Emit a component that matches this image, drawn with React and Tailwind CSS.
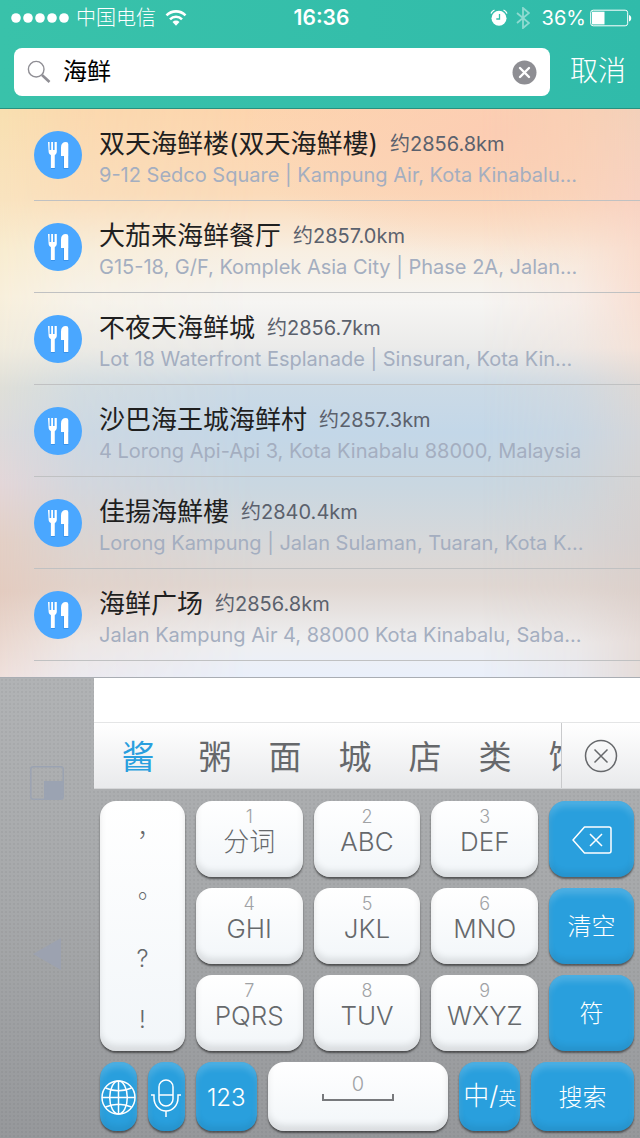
import { useState } from 'react';
import { clsx } from 'clsx';

const places = [
  { name: '双天海鲜楼(双天海鮮樓)', distance: '约2856.8km', address: '9-12 Sedco Square | Kampung Air, Kota Kinabalu...' },
  { name: '大茄来海鲜餐厅', distance: '约2857.0km', address: 'G15-18, G/F, Komplek Asia City | Phase 2A, Jalan...' },
  { name: '不夜天海鲜城', distance: '约2856.7km', address: 'Lot 18 Waterfront Esplanade | Sinsuran, Kota Kin...' },
  { name: '沙巴海王城海鲜村', distance: '约2857.3km', address: '4 Lorong Api-Api 3, Kota Kinabalu 88000, Malaysia' },
  { name: '佳揚海鮮樓', distance: '约2840.4km', address: 'Lorong Kampung | Jalan Sulaman, Tuaran, Kota K...' },
  { name: '海鲜广场', distance: '约2856.8km', address: 'Jalan Kampung Air 4, 88000 Kota Kinabalu, Saba...' },
];

const candidates = ['酱', '粥', '面', '城', '店', '类', '馆'];
const punctuation = ['，', '。', '?', '!'];

const keyRows = [
  [['1', '分词'], ['2', 'ABC'], ['3', 'DEF']],
  [['4', 'GHI'], ['5', 'JKL'], ['6', 'MNO']],
  [['7', 'PQRS'], ['8', 'TUV'], ['9', 'WXYZ']],
];

export default function App() {
  return (
    <div className="flex min-h-screen flex-col bg-[#9b9da0] font-[Inter,'Noto_Sans_CJK_SC',sans-serif]">
      <header className="border-b border-[#26917f] bg-linear-to-r from-[#39c2aa] to-[#30bbaa] text-white">
        <StatusBar />
        <SearchBar />
      </header>
      <Results />
      <Keyboard />
    </div>
  );
}

function StatusBar() {
  return (
    <div className="grid h-9 grid-cols-[1fr_auto_1fr] items-center pr-2 pl-[11px] text-xl">
      <div className="flex items-center gap-[7px]">
        <svg className="h-3 w-[58px]" viewBox="0 0 58 12" fill="currentColor">
          {[5, 17, 29, 41, 53].map((x) => (
            <circle key={x} cx={x} cy="6" r="4.8" />
          ))}
        </svg>
        <span className="font-light">中国电信</span>
        <WifiIcon />
      </div>
      <span className="text-[21px] font-semibold">16:36</span>
      <div className="flex items-center justify-end">
        <AlarmIcon />
        <BluetoothIcon />
        <span className="mr-1">36%</span>
        <svg className="h-[18px] w-[42px]" viewBox="0 0 42 18">
          <rect x="0.7" y="1.2" width="37" height="15.6" rx="2.5" fill="none" stroke="currentColor" strokeWidth="1" />
          <rect x="2" y="2.700" width="12.5" height="12.7" fill="currentColor" />
          <path d="M39 6c3 .5 3 6 0 6.500z" fill="currentColor" />
        </svg>
      </div>
    </div>
  );
}

function SearchBar() {
  const [query, setQuery] = useState('海鲜');

  return (
    <form className="flex items-center gap-5 px-[14px] py-3" onSubmit={(e) => e.preventDefault()}>
      <div className="flex h-12 min-w-0 flex-1 items-center rounded-lg bg-white px-[13px]">
        <svg className="mr-3 size-6 shrink-0" viewBox="0 0 24 24" fill="none" stroke="#8f8e94">
          <circle cx="9.200" cy="9.200" r="7.800" strokeWidth="1.400" />
          <path d="m15 15 7.500 7" strokeWidth="2.600" />
        </svg>
        <input
          type="text"
          aria-label="搜索"
          value={query}
          onChange={(e) => setQuery(e.target.value)}
          className="min-w-0 flex-1 bg-transparent text-2xl text-black outline-none"
        />
        <button type="button" aria-label="清空" onClick={() => setQuery('')}>
          <svg className="size-[25px]" viewBox="0 0 25 25">
            <circle cx="12.500" cy="12.500" r="12" fill="#8e8e93" />
            <path d="m8 8 9 9m0-9-9 9" stroke="#fff" strokeWidth="2.400" strokeLinecap="round" />
          </svg>
        </button>
      </div>
      <button type="button" className="pb-0.5 text-[28px] leading-9 font-light">取消</button>
    </form>
  );
}

function Results() {
  return (
    <main className="grid">
      {/* soft wallpaper: a middle tone with warmer left and right edges */}
      <div className="[grid-area:1/1] bg-[radial-gradient(ellipse_40%_25%_at_78%_4%,#fccdb3,transparent),linear-gradient(to_bottom,#fdd5ae_0%,#fbdbba_15%,#f8efe2_25%,#f6f5f3_34%,#ebebea_42%,#cbdae6_49%,#c3d7e8_57%,#c9d7e1_66%,#d6d8da_76%,#e0d7d2_84%,#eff0f2_94%,#eaf0fb_100%)]" />
      <div className="[grid-area:1/1] mask-[linear-gradient(to_right,black,#00000066_12%,transparent_40%)] bg-[linear-gradient(to_bottom,#f8dfb0_0%,#f9e3bf_16%,#f8ecd0_25%,#f8efdb_33%,#f0ebdd_42%,#dfdfd8_49%,#dcdadb_57%,#e3d6d8_66%,#e3cfc5_76%,#e3cbbf_85%,#ead8d0_94%,#efe0dc_100%)]" />
      <div className="[grid-area:1/1] mask-[linear-gradient(to_left,black,#00000059_10%,transparent_25%)] bg-[linear-gradient(to_bottom,#f3d0ba_0%,#f8d2c2_16%,#f9dccd_25%,#f8dfd3_33%,#f4e2d8_42%,#dcd8d6_49%,#d5d6d9_57%,#d5d3d3_66%,#d6d0cf_76%,#dcd0cb_85%,#e6dcd9_94%,#e5dcd9_100%)]" />
      <ul className="z-10 [grid-area:1/1] pb-4 pl-[34px]">
        {places.map((place) => (
          <PlaceRow key={place.name} {...place} />
        ))}
      </ul>
    </main>
  );
}

function PlaceRow({ name, distance, address }) {
  return (
    <li className="flex h-[92px] items-center gap-[17px] border-b border-[#c0c1c2] pr-6">
      <ForkKnifeIcon />
      <div className="min-w-0 flex-1 pt-2">
        <div className="flex items-center gap-3">
          <h2 className="text-[26px] leading-8 whitespace-nowrap text-[#1f1f1f]">{name}</h2>
          <span className="text-xl leading-8 whitespace-nowrap text-[#5b616d]">{distance}</span>
        </div>
        <p className="truncate text-xl leading-[30px] text-[#a4aec0]">{address}</p>
      </div>
    </li>
  );
}

function Keyboard() {
  return (
    <section className="flex flex-1 border-t border-[#a9adb3] bg-[radial-gradient(#0000000a_1px,transparent_1px),linear-gradient(to_bottom,#b1b3b5,#a6a8aa_50%,#96989b)] bg-size-[4px_4px,100%_100%]">
      <aside className="flex w-[94px] shrink-0 flex-col items-center pt-[88px]">
        <button type="button" aria-label="缩小键盘">
          <svg className="size-[34px]" viewBox="0 0 34 34">
            <rect x="0.800" y="0.800" width="32.400" height="32.400" rx="2.500" fill="none" stroke="#9ba3b2" strokeWidth="1.500" />
            <path d="M14 15h19v15.500q0 2.500-2.500 2.500H14z" fill="#9ba3b2" />
          </svg>
        </button>
        <button type="button" aria-label="靠左" className="mt-[138px]">
          <svg className="h-8 w-7" viewBox="0 0 28 32" fill="#9ca2b0">
            <path d="M0 16 28 0v32z" />
          </svg>
        </button>
      </aside>

      <div className="flex min-w-0 flex-1 flex-col">
        <div className="h-11 bg-white" />
        <CandidateBar />
        <div className="flex flex-col gap-[11px] px-[6px] pt-3 pb-[7px]">
          <div className="grid grid-cols-[85fr_107fr_107fr_107fr_85fr] gap-[11px]">
            <div className="row-span-3 flex flex-col rounded-2xl bg-linear-to-b from-white to-[#f2f6f9] pt-1 font-[Inter,'Noto_Sans_CJK_TC',sans-serif] text-2xl font-light text-[#66696c] shadow-[0_2px_2px_#00000080,inset_0_-6px_6px_#0000001a]">
              {punctuation.map((mark) => (
                <button key={mark} type="button" lang="zh-TW" className="flex-1">
                  {mark}
                </button>
              ))}
            </div>
            {keyRows.map((row, i) => (
              <KeyRow key={i} row={row} action={i} />
            ))}
          </div>
          <div className="grid grid-cols-[37fr_37fr_61fr_181fr_61fr_103fr] gap-[11px]">
            <BlueKey label="切换输入法" className="h-[69px]"><GlobeIcon /></BlueKey>
            <BlueKey label="语音" className="h-[69px]"><MicIcon /></BlueKey>
            <BlueKey className="h-[69px]">123</BlueKey>
            <button type="button" aria-label="空格" className="flex h-[69px] flex-col items-center rounded-2xl bg-linear-to-b from-white to-[#f2f6f9] pt-3 shadow-[0_2px_2px_#00000080,inset_0_-6px_6px_#0000001a]">
              <span className="text-xl leading-5 font-light text-[#a0a2a5]">0</span>
              <svg className="h-2 w-[72px]" viewBox="0 0 72 8" fill="none" stroke="#77797c" strokeWidth="2">
                <path d="M1 0v6h70V0" />
              </svg>
            </button>
            <BlueKey className="h-[69px]">
              <span className="text-[26px] leading-8 whitespace-nowrap">
                中/<span className="text-lg leading-8">英</span>
              </span>
            </BlueKey>
            <BlueKey className="h-[69px]">搜索</BlueKey>
          </div>
        </div>
      </div>
    </section>
  );
}

function CandidateBar() {
  return (
    <div className="flex h-[67px] border-t border-b border-t-[#e4e5e6] border-b-[#d5d6d8] bg-linear-to-b from-white to-[#e9eaec]">
      <div className="flex min-w-0 flex-1 gap-[10px] overflow-hidden pt-1 pl-[7px]">
        {candidates.map((word, i) => (
          <button
            key={word}
            type="button"
            className={clsx('shrink-0 text-[33px]', i === 0 ? 'w-[74px] text-[#2a9fde]' : 'w-[60px] text-[#66686b]')}
          >
            {word}
          </button>
        ))}
      </div>
      <button type="button" aria-label="关闭" className="flex w-[79px] shrink-0 items-center justify-center border-l border-[#c9cacc]">
        <svg className="size-[34px]" viewBox="0 0 34 34" fill="none" stroke="#66686b" strokeWidth="1.500">
          <circle cx="17" cy="17" r="15.500" />
          <path d="m10.500 10.500 13 13m0-13-13 13" />
        </svg>
      </button>
    </div>
  );
}

function KeyRow({ row, action }) {
  return (
    <>
      {row.map(([digit, letters]) => (
        <button
          key={digit}
          type="button"
          className="flex h-[76px] flex-col items-center rounded-2xl bg-linear-to-b from-white to-[#f2f6f9] pt-[7px] text-[#66696c] shadow-[0_2px_2px_#00000080,inset_0_-6px_6px_#0000001a]"
        >
          <span className="text-lg leading-[18px] font-light text-[#a0a2a5]">{digit}</span>
          <span className="text-[26px] leading-8 font-light">{letters}</span>
        </button>
      ))}
      {action === 0 && <BlueKey label="删除" className="h-[76px]"><BackspaceIcon /></BlueKey>}
      {action === 1 && <BlueKey className="h-[76px]">清空</BlueKey>}
      {action === 2 && <BlueKey className="h-[76px]">符</BlueKey>}
    </>
  );
}

function BlueKey({ label, className, children }) {
  return (
    <button
      type="button"
      aria-label={label}
      className={clsx(
        'flex items-center justify-center rounded-2xl bg-[#299fdd] pt-0.5 text-2xl font-light text-white shadow-[0_2px_2px_#00000073,inset_0_6px_6px_#ffffff2b,inset_0_-5px_6px_#00000014]',
        className
      )}
    >
      {children}
    </button>
  );
}

function ForkKnifeIcon() {
  return (
    <svg className="size-12 shrink-0" viewBox="0 0 48 48">
      <circle cx="24" cy="24" r="24" fill="#4aa7ff" />
      <path d="M17 25h4v13h-4zM29.500 25h5v13h-5z" fill="#2b83dc" opacity=".6" />
      <g fill="#fff">
        <path d="M14 11h1.600v8h1.600v-8h1.800v8h1.600v-8h2.200v9.500c0 1.900-.9 3-2 3.600V37h-3.900V24.100c-1.300-.6-2.300-1.700-2.300-3.600z" />
        <path d="M32 11q2.300 0 2.300 2.300V37h-4.300V25h-3v-8.500q0-5.500 5-5.500z" />
      </g>
    </svg>
  );
}

function WifiIcon() {
  return (
    <svg className="ml-0.5 h-[18px] w-[22px]" viewBox="0 0 22 18" fill="none" stroke="currentColor" strokeWidth="2.600">
      <path d="M1.500 6.300a13.500 13.500 0 0 1 19 0M5 10.300a8.500 8.500 0 0 1 12 0" />
      <path d="M7.500 13a5 5 0 0 1 7 0L11 16.800z" fill="currentColor" stroke="none" />
    </svg>
  );
}

function AlarmIcon() {
  return (
    <svg className="mr-2 size-[18px]" viewBox="0 0 18 18" fill="none">
      <circle cx="9" cy="9.300" r="7.500" fill="currentColor" />
      <path d="M9.500 5v5H6.300" stroke="#36bfab" strokeWidth="1.300" />
      <path d="M1 4.500A6 6 0 0 1 4.500 1M17 4.500A6 6 0 0 0 13.500 1" stroke="currentColor" strokeWidth="1.300" />
    </svg>
  );
}

function BluetoothIcon() {
  return (
    <svg className="mr-3 h-[22px] w-[14px] opacity-45" viewBox="0 0 14 22" fill="none" stroke="currentColor" strokeWidth="1.800">
      <path d="m1 6 12 10-6 5V1l6 5L1 16" />
    </svg>
  );
}

function BackspaceIcon() {
  return (
    <svg className="h-7 w-10" viewBox="0 0 40 28" fill="none" stroke="currentColor" strokeWidth="1.500" strokeLinejoin="round">
      <path d="M12.500 1H37q2 0 2 2v22q0 2-2 2H12.500L1 14z" />
      <path d="m18 8 12 12m0-12L18 20" />
    </svg>
  );
}

function GlobeIcon() {
  return (
    <svg className="size-[35px]" viewBox="0 0 35 35" fill="none" stroke="currentColor" strokeWidth="1.500">
      <circle cx="17.500" cy="17.500" r="16.500" />
      <ellipse cx="17.500" cy="17.500" rx="8.800" ry="16.500" />
      <path d="M17.500 1v33M1 17.500h33M4.500 8c8 3.500 18 3.500 26 0M4.500 27c8-3.500 18-3.500 26 0" />
    </svg>
  );
}

function MicIcon() {
  return (
    <svg className="h-[38px] w-8" viewBox="0 0 32 38" fill="none" stroke="currentColor" strokeWidth="1.500">
      <rect x="9" y="1" width="14" height="26" rx="7" />
      <path d="M9 16h14M1 16h3v3a12 13 0 0 0 24 0v-3h3M16 32v6" />
    </svg>
  );
}
